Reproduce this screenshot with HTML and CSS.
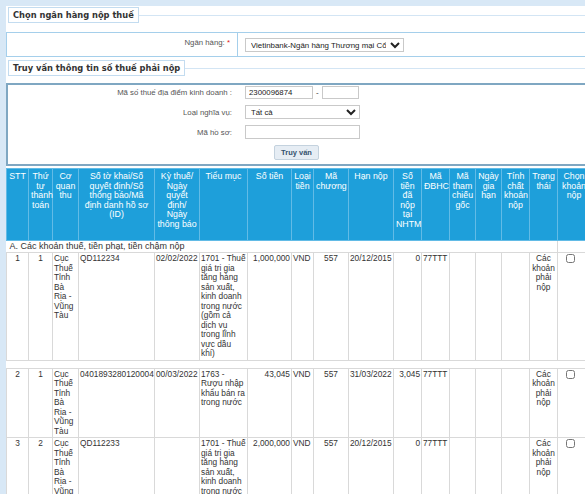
FILE: index.html
```html
<!DOCTYPE html>
<html lang="vi">
<head>
  <meta charset="UTF-8">
  <meta name="viewport" content="width=device-width, initial-scale=1.0">
  <title>Truy vấn thông tin số thuế phải nộp</title>
  <link rel="stylesheet" href="styles.css">
</head>
<body>
  <div class="page">
    <div class="legend"><span>Chọn ngân hàng nộp thuế</span></div>
    <div class="box bank">
      <div class="label">Ngân hàng: <span class="req">*</span></div>
      <div class="field">
        <select class="sel-bank">
          <option>Vietinbank-Ngân hàng Thương mại Cổ phần Công Thương Việt Nam</option>
        </select>
      </div>
    </div>

    <div class="legend"><span>Truy vấn thông tin số thuế phải nộp</span></div>
    <div class="box query">
      <div class="row">
        <div class="label">Mã số thuế địa điểm kinh doanh :</div>
        <div class="field">
          <input class="in-mst" type="text" value="2300096874">
          <span class="dash">-</span>
          <input class="in-sub" type="text">
        </div>
      </div>
      <div class="row">
        <div class="label">Loại nghĩa vụ:</div>
        <div class="field">
          <select class="sel-type"><option>Tất cả</option></select>
        </div>
      </div>
      <div class="row">
        <div class="label">Mã hồ sơ:</div>
        <div class="field"><input class="in-hs" type="text"></div>
      </div>
      <div class="row">
        <div></div>
        <div class="field"><button class="btn">Truy vấn</button></div>
      </div>
    </div>

    <table class="grid">
      <colgroup>
        <col class="w22"><col class="w24"><col class="w26"><col class="w76">
        <col class="w45"><col class="w48"><col class="w44"><col class="w22">
        <col class="w35"><col class="w45"><col class="w28"><col class="w28">
        <col class="w26"><col class="w26"><col class="w28"><col class="w28">
        <col class="w33">
      </colgroup>
      <thead>
        <tr>
          <th>STT</th>
          <th>Thứ tự thanh toán</th>
          <th>Cơ quan thu</th>
          <th>Số tờ khai/Số quyết định/Số thông báo/Mã định danh hồ sơ (ID)</th>
          <th>Kỳ thuế/ Ngày quyết định/ Ngày thông báo</th>
          <th>Tiểu mục</th>
          <th>Số tiền</th>
          <th>Loại tiền</th>
          <th>Mã chương</th>
          <th>Hạn nộp</th>
          <th>Số tiền đã nộp tại NHTM</th>
          <th>Mã ĐBHC</th>
          <th>Mã tham chiếu gốc</th>
          <th>Ngày gia hạn</th>
          <th>Tính chất khoản nộp</th>
          <th>Trạng thái</th>
          <th>Chọn khoản nộp</th>
        </tr>
      </thead>
      <tbody>
        <tr class="section">
          <td colspan="16">A. Các khoản thuế, tiền phạt, tiền chậm nộp</td>
          <td></td>
        </tr>
        <tr>
          <td class="c">1</td>
          <td class="c">1</td>
          <td>Cục Thuế Tỉnh Bà Rịa - Vũng Tàu</td>
          <td>QD112234</td>
          <td>02/02/2022</td>
          <td>1701 - Thuế giá trị gia tăng hàng sản xuất, kinh doanh trong nước (gồm cả dịch vụ trong lĩnh vực dầu khí)</td>
          <td class="r">1,000,000</td>
          <td>VND</td>
          <td class="c">557</td>
          <td>20/12/2015</td>
          <td class="r">0</td>
          <td>77TTT</td>
          <td></td>
          <td></td>
          <td></td>
          <td class="c status">Các khoản phải nộp</td>
          <td class="c"><input type="checkbox" class="pick"></td>
        </tr>
        <tr class="gap"><td colspan="17"></td></tr>
        <tr>
          <td class="c">2</td>
          <td class="c">1</td>
          <td>Cục Thuế Tỉnh Bà Rịa - Vũng Tàu</td>
          <td>0401893280120004</td>
          <td>00/03/2022</td>
          <td>1763 - Rượu nhập khẩu bán ra trong nước</td>
          <td class="r">43,045</td>
          <td>VND</td>
          <td class="c">557</td>
          <td>31/03/2022</td>
          <td class="r">3,045</td>
          <td>77TTT</td>
          <td></td>
          <td></td>
          <td></td>
          <td class="c status">Các khoản phải nộp</td>
          <td class="c"><input type="checkbox" class="pick"></td>
        </tr>
        <tr>
          <td class="c">3</td>
          <td class="c">2</td>
          <td>Cục Thuế Tỉnh Bà Rịa - Vũng Tàu</td>
          <td>QD112233</td>
          <td></td>
          <td>1701 - Thuế giá trị gia tăng hàng sản xuất, kinh doanh trong nước (gồm cả dịch vụ trong lĩnh vực dầu khí)</td>
          <td class="r">2,000,000</td>
          <td>VND</td>
          <td class="c">557</td>
          <td>20/12/2015</td>
          <td class="r">0</td>
          <td>77TTT</td>
          <td></td>
          <td></td>
          <td></td>
          <td class="c status">Các khoản phải nộp</td>
          <td class="c"><input type="checkbox" class="pick"></td>
        </tr>
      </tbody>
    </table>
  </div>
</body>
</html>
```

FILE: styles.css
```css
html, body { margin: 0; overflow: hidden; }
body { background: #d8e8f6; font-family: "Liberation Sans", Arial, sans-serif; color: #333; }
.page { margin: 6px 0 0 6px; width: 600px; min-height: 500px; background: #fff; }

/* section titles */
.legend { display: flex; align-items: center; padding: 1px 0 0 2px; }
.legend span { font-family: "DejaVu Sans", Verdana, sans-serif; font-weight: bold; font-size: 8.3px; color: #333; height: 14px; line-height: 14px; padding: 0 4px; border: 1px solid #c3dcf0; white-space: nowrap; }
.legend::after { content: ""; flex: 1; border-top: 1px solid #d3e5f4; }

.box { box-sizing: border-box; }
.label { font-size: 7.8px; color: #555; text-align: right; white-space: nowrap; }
.req { color: #e02020; }

.bank { display: grid; grid-template-columns: 231px 1fr; height: 25px; margin: 9px 0 2px; border: 1px solid #a5cfeb; }
.bank .label { padding: 5px 7px 0 0; border-right: 1px solid #a5cfeb; }
.bank .field { padding: 1px 0 0 7px; }

.query { margin-top: 7px; padding: 1px 0 4px; border: 2px solid #7fa7c2; display: flex; flex-direction: column; gap: 6px; }
.query .row { display: grid; grid-template-columns: 224px 1fr; column-gap: 13px; align-items: center; }
.field { display: flex; align-items: center; }

input[type=text], select { box-sizing: border-box; font-family: "Liberation Sans", Arial, sans-serif; font-size: 7.8px; color: #222; border: 1px solid #c9c9c9; border-radius: 0; background: #fff; padding: 0 3px; margin: 0; }
input[type=text] { height: 13px; }
select { height: 14px; padding: 0 1px; }
.sel-bank { width: 159px; font-size: 7.9px; }
.in-mst { width: 68px; }
.dash { font-size: 8px; margin: 0 3px; }
.in-sub { width: 37px; }
.sel-type { width: 115px; }
.in-hs { width: 115px; height: 14px !important; }
.btn { margin-left: 29px; width: 45px; height: 15px; padding: 0; font-family: "Liberation Sans", Arial, sans-serif; font-size: 7.5px; font-weight: bold; color: #35526e; background: #e6edf4; border: 1px solid #c4d2de; border-radius: 2px; }

/* results table */
.grid { margin-top: 2px; border-collapse: collapse; table-layout: fixed; width: 584px; }
.w22 { width: 22px; } .w24 { width: 24px; } .w26 { width: 26px; } .w28 { width: 28px; }
.w33 { width: 33px; } .w35 { width: 35px; } .w44 { width: 44px; } .w45 { width: 45px; }
.w48 { width: 48px; } .w76 { width: 76px; }
.grid th { background: #1e9fda; color: #fff; font-weight: normal; font-size: 8.8px; line-height: 9.6px; text-align: center; vertical-align: top; padding: 3px 2px 2px; border: 1px solid #62bbe6; height: 66px; }
.grid td { font-size: 8.3px; line-height: 9.5px; vertical-align: top; padding: 1px; border: 1px solid #d9d9d9; color: #333; overflow: hidden; }
.grid td.c { text-align: center; }
.grid td.r { text-align: right; }
.grid .section td { font-size: 9px; line-height: 11px; padding: 0 3px; border-left: none; border-right: none; }
.grid .section td:last-child { border-left: 1px solid #d9d9d9; }
.grid .gap td { height: 7px; padding: 0; border-left: none; border-right: none; }
.status { color: #555; }
.pick { width: 9px; height: 9px; margin: 0 8px 0 0; }
```
